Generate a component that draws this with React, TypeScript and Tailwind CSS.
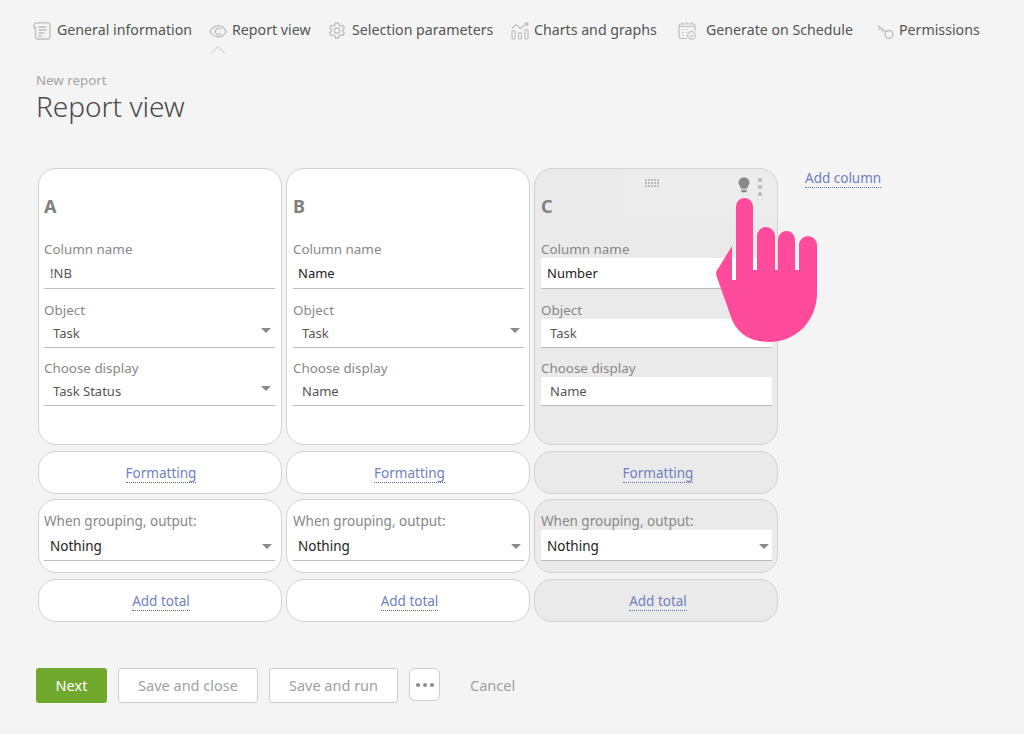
import type { ReactNode } from "react";

const font = "font-['Noto_Sans','Open_Sans',sans-serif]";

function DocIcon() {
  return (
    <svg viewBox="0 0 18 18" className="h-[18px] w-[18px]" fill="none" stroke="#bdbdbd" strokeWidth="1.3">
      <path d="M4 .8h10.500a2.500 2.500 0 0 1 2.500 2.500v11.200a2.500 2.500 0 0 1-2.500 2.500H5a2.500 2.500 0 0 1-2.500-2.500V5.500H.8V4a3.200 3.200 0 0 1 3.200-3.200z" />
      <path d="M5.500 5h8M5.500 8h8M5.500 11h6M5.500 14h3" />
    </svg>
  );
}

function EyeIcon() {
  return (
    <svg viewBox="0 0 18 18" className="h-[18px] w-[18px]" fill="none" stroke="#bdbdbd" strokeWidth="1.4">
      <path d="M.8 9.500C3 6 5.800 3.800 9.500 3.800c3 0 5.500 1.700 7.700 5.700-2.200 3.700-4.700 5.500-7.700 5.500-3.700 0-6.500-2-8.700-5.500z" />
      <path d="M11.800 7.500a3.100 3.100 0 1 0 0 4" />
    </svg>
  );
}

function GearIcon() {
  return (
    <svg viewBox="0 0 18 18" className="h-[18px] w-[18px]" fill="none" stroke="#bdbdbd" strokeWidth="1.3">
      <path d="M7.400 1h3.200l.5 2.300 1.500.8 2.200-.8 1.600 2.800-1.700 1.500v1.700l1.700 1.500-1.600 2.800-2.200-.8-1.500.8-.5 2.400H7.400l-.5-2.400-1.500-.8-2.200.8-1.600-2.800 1.700-1.500V7.600L1.600 6.100l1.600-2.800 2.200.8 1.500-.8z" strokeLinejoin="round" />
      <circle cx="9" cy="8.500" r="2.700" />
    </svg>
  );
}

function ChartIcon() {
  return (
    <svg viewBox="0 0 18 18" className="h-[18px] w-[18px]" fill="none" stroke="#bdbdbd" strokeWidth="1.2">
      <path d="M1 6.500 5 2.500l4.500 4L16.500 1M13.500 1h3.200v3" />
      <rect x="1" y="8.500" width="3" height="8.500" rx="1" />
      <rect x="7.500" y="10.500" width="3" height="6.500" rx="1" />
      <rect x="14" y="7.500" width="3" height="9.500" rx="1" />
    </svg>
  );
}

function ScheduleIcon() {
  return (
    <svg viewBox="0 0 18 18" className="h-[18px] w-[18px]" fill="none" stroke="#bdbdbd" strokeWidth="1.2">
      <path d="M9 16.500H3A2 2 0 0 1 1 14.500V4a2 2 0 0 1 2-2h12a2 2 0 0 1 2 2v5" />
      <path d="M4 .5v1.500M9 .5v1.500M14 .5v1.500M1.500 4.500h15M4 7.500h1.500M4 10.500h1.500M4 13.500h1.500M8 7.500h1.500M8 10.500h1" />
      <circle cx="13.500" cy="13.500" r="3.800" />
      <path d="m12 13.600 1.100 1.100 2-2.100" />
    </svg>
  );
}

function KeyIcon() {
  return (
    <svg viewBox="0 0 18 18" className="h-[18px] w-[18px]" fill="none" stroke="#bdbdbd" strokeWidth="1.4">
      <circle cx="13" cy="12.500" r="4" />
      <path d="M10 10 1.500 3.500M4.300 5.700 2.800 7.800M7 7.800 5.600 9.700" />
    </svg>
  );
}

const tabs: { label: string; icon: ReactNode; width: string; gap: string; active?: boolean }[] = [
  { label: "General information", icon: <DocIcon />, width: "w-[176px]", gap: "gap-[6px]" },
  { label: "Report view", icon: <EyeIcon />, width: "w-[119px]", gap: "gap-[5px]", active: true },
  { label: "Selection parameters", icon: <GearIcon />, width: "w-[183px]", gap: "gap-[6px]" },
  { label: "Charts and graphs", icon: <ChartIcon />, width: "w-[167px]", gap: "gap-[5px]" },
  { label: "Generate on Schedule", icon: <ScheduleIcon />, width: "w-[198px]", gap: "gap-[10px]" },
  { label: "Permissions", icon: <KeyIcon />, width: "w-[110px]", gap: "gap-[5px]" },
];

function Caret({ lift }: { lift?: boolean }) {
  return <span className={`h-0 w-0 border-x-[5px] border-t-[5px] border-x-transparent border-t-[#8a8a8a] ${lift ? "-mt-[7px]" : ""}`} />;
}

type FieldProps = {
  label: string;
  value: string;
  height: string;
  indent: string;
  select?: boolean;
  active: boolean;
  dark?: boolean;
};

function Field({ label, value, height, indent, select, active, dark }: FieldProps) {
  return (
    <div>
      <div className="h-[19px] text-[13.4px] leading-[21px] text-[#888888]">{label}</div>
      <div className={`flex w-[231px] items-center justify-between border-b border-[#bcbcbc] pr-[4px] pt-[2px] text-[13px] ${height} ${indent} ${dark ? "text-[#222222]" : "text-[#555555]"} ${active ? "bg-white" : ""}`}>
        <span>{value}</span>
        {select && <Caret lift />}
      </div>
    </div>
  );
}

const cardClass = "w-[244px] rounded-[18px] border border-[#d2d2d2]";

function LinkRow({ text, active, nudge }: { text: string; active: boolean; nudge: string }) {
  return (
    <div className={`${cardClass} flex h-[43px] items-center justify-center pt-[2px] ${nudge} ${active ? "bg-[#eaeaea]" : "bg-white"}`}>
      <span className="border-b border-dotted border-[#5f6fb5] text-[13.5px] leading-[17px] text-[#6f7fbf]">{text}</span>
    </div>
  );
}

const columns = [
  { letter: "A", name: "!NB", nameDark: false, display: "Task Status", displaySelect: true, pad: "pl-[5px]", nudge: "pl-[2px]", nameIndent: "pl-[6px]" },
  { letter: "B", name: "Name", nameDark: true, display: "Name", displaySelect: false, pad: "pl-[6px]", nudge: "pl-[3px]", nameIndent: "pl-[5px]" },
  { letter: "C", name: "Number", nameDark: true, display: "Name", displaySelect: false, pad: "pl-[6px]", nudge: "pl-[4px]", nameIndent: "pl-[6px]" },
];

function Column({ col }: { col: (typeof columns)[number] }) {
  const active = col.letter === "C";
  return (
    <div className="flex w-[244px] flex-col">
      <div className={`${cardClass} relative h-[277px] ${col.pad} ${active ? "bg-[#eaeaea]" : "bg-white"}`}>
        {active && (
          <>
            <div className="absolute left-[110px] top-[10px] grid grid-cols-5 gap-[1px]">
              {Array.from({ length: 15 }).map((_, i) => (
                <span key={i} className="h-[2px] w-[2px] bg-[#b5b5b5]" />
              ))}
            </div>
            <svg viewBox="0 0 14 18" className="absolute left-[203px] top-[8px] h-[16px] w-[12px]" fill="#7d7d7d">
              <path d="M7 0a6.500 6.500 0 0 1 6.500 6.500c0 2.600-2.500 4-3 7H3.500c-.5-3-3-4.400-3-7A6.500 6.500 0 0 1 7 0z" />
              <rect x="4" y="14.500" width="6" height="3" />
            </svg>
            <div className="absolute left-[223px] top-[9px] flex flex-col gap-[3px]">
              <span className="h-[4px] w-[4px] rounded-full bg-[#adadad]" />
              <span className="h-[4px] w-[4px] rounded-full bg-[#adadad]" />
              <span className="h-[4px] w-[4px] rounded-full bg-[#adadad]" />
            </div>
          </>
        )}
        <div className="mt-[25px] h-[45px] text-[18px] font-bold leading-[25px] text-[#808080]">{col.letter}</div>
        <Field label="Column name" value={col.name} height="h-[31px]" indent={col.nameIndent} active={active} dark={col.nameDark} />
        <div className="mt-[11px]">
          <Field label="Object" value="Task" height="h-[29px]" indent="pl-[9px]" select={!active} active={active} />
        </div>
        <div className="mt-[10px]">
          <Field label="Choose display" value={col.display} height="h-[29px]" indent="pl-[9px]" select={col.displaySelect} active={active} />
        </div>
      </div>
      <div className="mt-[6px]">
        <LinkRow text="Formatting" active={active} nudge={col.nudge} />
      </div>
      <div className={`${cardClass} mt-[5px] h-[74px] pt-[13px] ${col.pad} ${active ? "bg-[#eaeaea]" : "bg-white"}`}>
        <div className="h-[17px] text-[13.5px] leading-[17px] text-[#888888]">When grouping, output:</div>
        <div className={`flex h-[31px] w-[231px] items-center justify-between border-b border-[#bcbcbc] pr-[3px] pt-[2px] text-[13.5px] text-[#222222] ${col.nameIndent} ${active ? "bg-white" : ""}`}>
          <span>Nothing</span>
          <Caret />
        </div>
      </div>
      <div className="mt-[6px]">
        <LinkRow text="Add total" active={active} nudge={col.nudge} />
      </div>
    </div>
  );
}

export default function App() {
  return (
    <div className={`relative h-[734px] w-[1024px] overflow-hidden bg-[#f4f4f4] ${font}`}>
      <nav className="flex h-[58px] items-start pl-[33px] pt-[21px]">
        {tabs.map((t) => (
          <div key={t.label} className={`relative flex h-[18px] shrink-0 items-center ${t.gap} ${t.width}`}>
            <span className="mt-[2px]">{t.icon}</span>
            <span className="whitespace-nowrap text-[14.2px] leading-[18px] text-[#555555]">{t.label}</span>
            {t.active && (
              <svg viewBox="0 0 14 8" className="absolute left-[2px] top-[25px] h-[8px] w-[14px]" fill="none" stroke="#c4c4c4">
                <path d="m.5 7 6.500-6 6.500 6" />
              </svg>
            )}
          </div>
        ))}
      </nav>

      <header className="pl-[36px] pt-[14px]">
        <div className="text-[13.3px] leading-[17px] text-[#a3a3a3]">New report</div>
        <h1 className="h-[36px] text-[28px] font-light leading-[34px] text-[#4a4a4a]">Report view</h1>
      </header>

      <div className="mt-[43px] flex items-start pl-[38px]">
        <div className="flex gap-[4px]">
          {columns.map((c) => (
            <Column key={c.letter} col={c} />
          ))}
        </div>
        <span className="ml-[27px] mt-[2px] border-b border-dotted border-[#5f6fb5] text-[13.5px] leading-[17px] text-[#6f7fbf]">Add column</span>
      </div>

      <footer className="mt-[46px] flex items-start pl-[36px] text-[14.5px]">
        <button className="h-[35px] w-[71px] rounded-[3px] bg-[#70a82e] text-white">Next</button>
        <button className="ml-[11px] h-[35px] w-[140px] rounded-[3px] border border-[#cccccc] bg-white text-[#a0a0a0]">Save and close</button>
        <button className="ml-[11px] h-[35px] w-[129px] rounded-[3px] border border-[#cccccc] bg-white text-[#a0a0a0]">Save and run</button>
        <button className="ml-[11px] flex h-[33px] w-[31px] items-center justify-center gap-[3px] rounded-[6px] border border-[#cccccc] bg-white">
          <span className="h-[4px] w-[4px] rounded-full bg-[#8a8a8a]" />
          <span className="h-[4px] w-[4px] rounded-full bg-[#8a8a8a]" />
          <span className="h-[4px] w-[4px] rounded-full bg-[#8a8a8a]" />
        </button>
        <span className="ml-[30px] leading-[35px] text-[#a0a0a0]">Cancel</span>
      </footer>

      <div className="pointer-events-none absolute left-[616px] top-[164px] h-[60px] w-[172px] bg-white/10 blur-[4px]" />

      <svg viewBox="0 0 101 144" className="absolute left-[716px] top-[198px] h-[144px] w-[101px]" fill="#ff4b9b">
        <path d="M20 8.500a8.500 8.500 0 0 1 17 0V72h4V38a9 9 0 0 1 18 0v34h3V41.500a8.500 8.500 0 0 1 17 0V72h4V47a9 9 0 0 1 18 0v48c0 27-20 49-48 49-20 0-33-10-38-25L.5 78c-1-3 0-6 2-8L16 48v34h4z" />
      </svg>
    </div>
  );
}
